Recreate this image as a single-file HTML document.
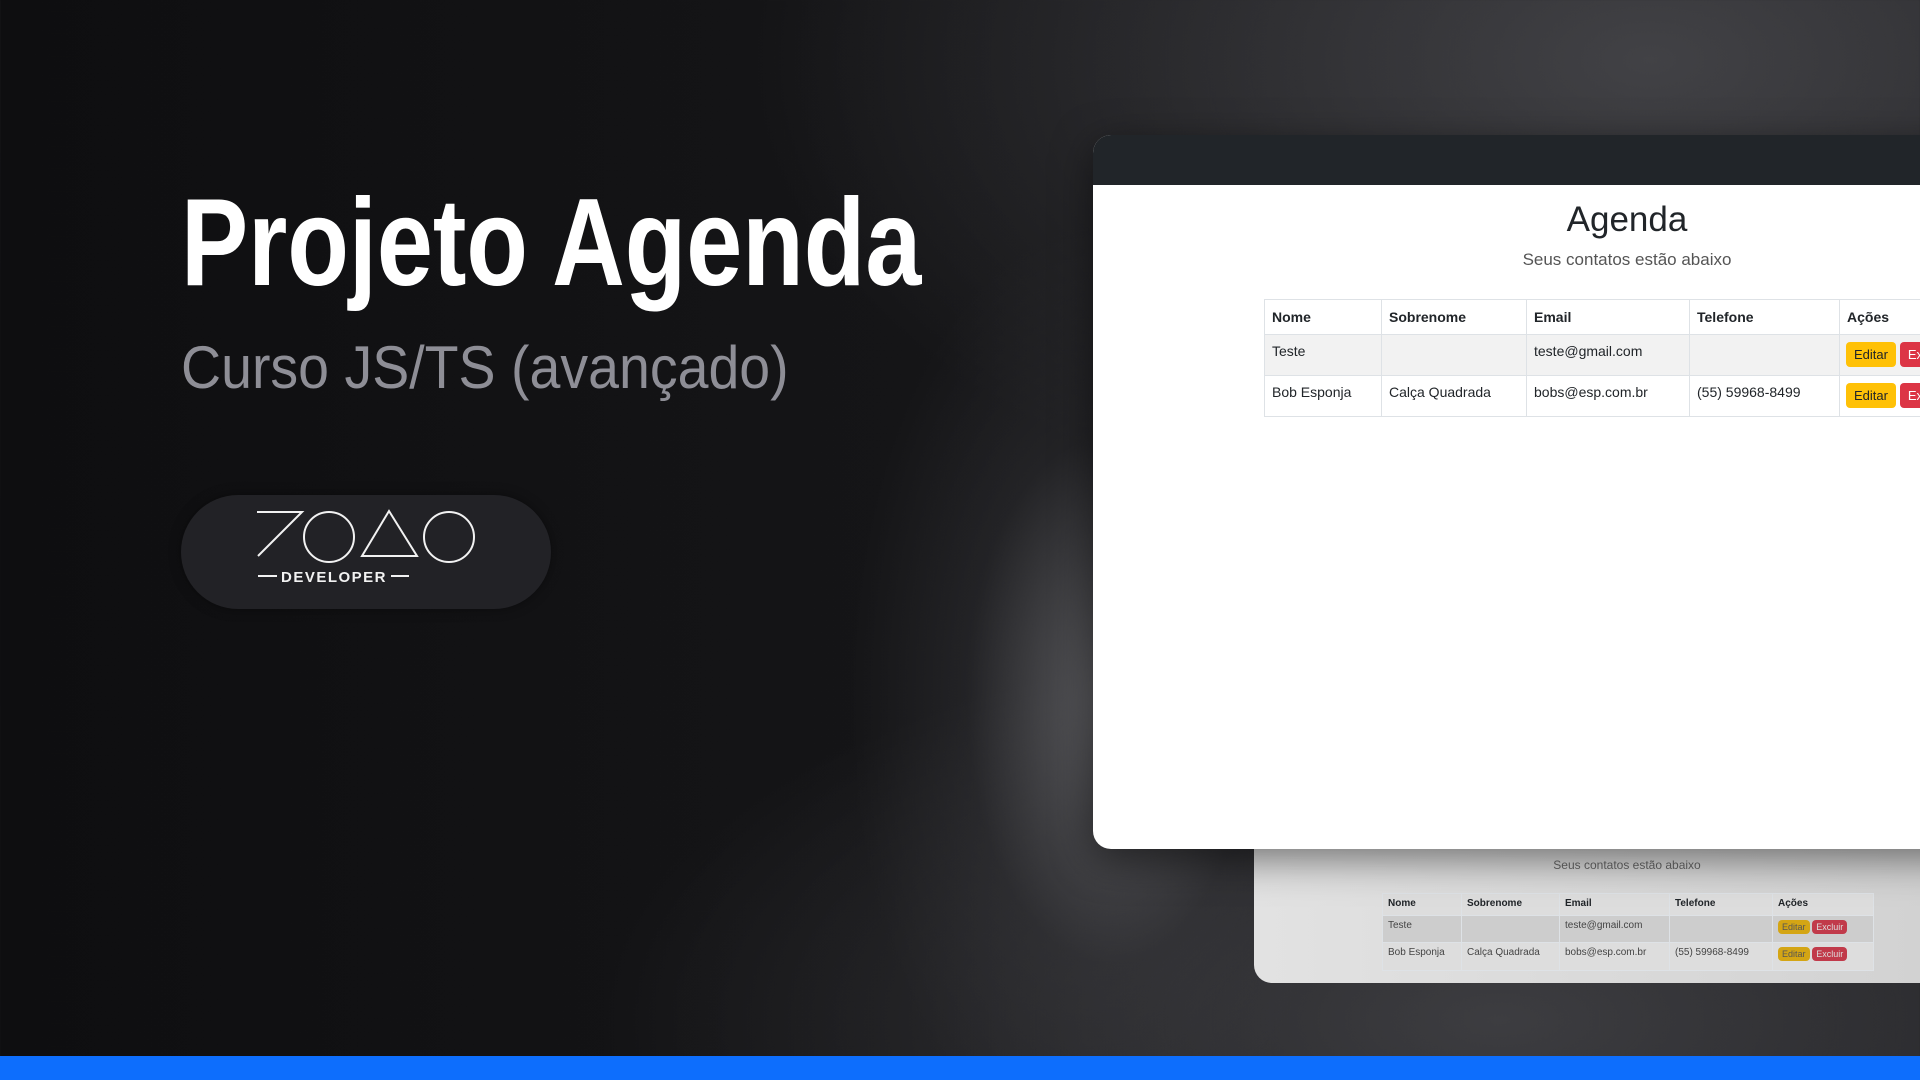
<!DOCTYPE html>
<html><head><meta charset="utf-8"><style>
*{margin:0;padding:0;box-sizing:border-box}
html,body{width:1920px;height:1080px;overflow:hidden}
body{position:relative;font-family:"Liberation Sans",sans-serif;
background:
radial-gradient(ellipse 260px 480px at 1110px 700px, rgba(110,110,114,0.8), rgba(60,60,64,0.35) 55%, rgba(0,0,0,0) 100%),
radial-gradient(ellipse 900px 500px at 1650px 60px, rgba(70,70,74,0.9), rgba(0,0,0,0) 100%),
radial-gradient(ellipse 900px 400px at 1500px 1020px, rgba(70,70,74,0.8), rgba(0,0,0,0) 100%),
linear-gradient(90deg,#0e0e10 0%,#141416 40%,#1c1c1f 100%);}
.t{position:absolute;left:181px;top:181px;font-size:124px;font-weight:bold;color:#fff;white-space:nowrap;transform:scaleX(0.812);transform-origin:left top;line-height:1}
.s{position:absolute;left:181px;top:338px;font-size:60px;color:#8e8e96;white-space:nowrap;transform:scaleX(0.925);transform-origin:left top;line-height:1}
.pill{position:absolute;left:181px;top:495px;width:370px;height:114px;border-radius:57px;background:#222226;box-shadow:0 0 12px rgba(0,0,0,.4)}
.win{position:absolute;border-radius:18px;overflow:hidden}
.w1{left:1093px;top:135px;width:900px;height:714px;background:#fff;box-shadow:0 10px 40px rgba(0,0,0,.5)}
.w1 .bar{height:50px;background:#212529}
.w2{left:1254px;top:780px;width:800px;height:203px;background:linear-gradient(90deg,#e2e2e2,#cfcfcf);}
table{border-collapse:collapse;position:absolute}
td,th{border:1px solid #dee2e6;text-align:left;vertical-align:top;color:#212529}
.btn{display:inline-block;border-radius:4px}
</style></head><body>
<div class="t">Projeto Agenda</div>
<div class="s">Curso JS/TS (avançado)</div>
<div class="pill">
<svg width="370" height="114" style="position:absolute;left:0;top:0">
<g fill="none" stroke="#f2f2f2" stroke-width="2">
<path d="M76 17 H121 L77 61"/>
<circle cx="148" cy="42" r="25"/>
<path d="M208 16 L236 61 H181 Z"/>
<circle cx="268" cy="42" r="25"/>
<path d="M77 81 H96 M210 81 H228"/>
</g>
<text x="153" y="87" text-anchor="middle" fill="#f2f2f2" font-family="Liberation Sans" font-weight="bold" font-size="15" letter-spacing="1.5">DEVELOPER</text>
</svg>
</div>

<div class="win w2">
<div style="position:absolute;left:0;width:746px;top:78px;text-align:center;font-size:12px;color:#666">Seus contatos estão abaixo</div>
<table style="left:128px;top:113px;font-size:10px;background:#ddd">
<tr style="height:22px"><th style="width:79px;padding:4px 5px">Nome</th><th style="width:98px;padding:4px 5px">Sobrenome</th><th style="width:110px;padding:4px 5px">Email</th><th style="width:103px;padding:4px 5px">Telefone</th><th style="width:101px;padding:4px 5px">Ações</th></tr>
<tr style="height:27px;background:#cdcdcd"><td style="padding:4px 5px;color:#444">Teste</td><td></td><td style="padding:4px 5px;color:#444">teste@gmail.com</td><td></td><td style="padding:4px 5px"><span class="btn" style="background:#d4a514;color:#555;padding:2px 4px;font-size:9px">Editar</span> <span class="btn" style="background:#c13a4a;color:#ddd;padding:2px 4px;font-size:9px">Excluir</span></td></tr>
<tr style="height:28px"><td style="padding:4px 5px;color:#444">Bob Esponja</td><td style="padding:4px 5px;color:#444">Calça Quadrada</td><td style="padding:4px 5px;color:#444">bobs@esp.com.br</td><td style="padding:4px 5px;color:#444">(55) 59968-8499</td><td style="padding:4px 5px"><span class="btn" style="background:#d4a514;color:#555;padding:2px 4px;font-size:9px">Editar</span> <span class="btn" style="background:#c13a4a;color:#ddd;padding:2px 4px;font-size:9px">Excluir</span></td></tr>
</table>
</div>

<div class="win w1">
<div class="bar"></div>
<div style="position:absolute;left:0;width:1068px;top:65px;text-align:center;font-size:35px;color:#212529">Agenda</div>
<div style="position:absolute;left:0;width:1068px;top:115px;text-align:center;font-size:17px;color:#555">Seus contatos estão abaixo</div>
<table style="left:171px;top:164px;font-size:14px">
<tr style="height:35px"><th style="width:117px;padding:9px 7px">Nome</th><th style="width:145px;padding:9px 7px">Sobrenome</th><th style="width:163px;padding:9px 7px">Email</th><th style="width:150px;padding:9px 7px">Telefone</th><th style="width:140px;padding:9px 7px;white-space:nowrap">Ações</th></tr>
<tr style="height:41px;background:#f2f2f2"><td style="padding:8px 7px">Teste</td><td></td><td style="padding:8px 7px">teste@gmail.com</td><td></td><td style="padding:7px 6px;white-space:nowrap"><span class="btn" style="background:#ffc107;padding:5px 8px;font-size:13px">Editar</span> <span class="btn" style="background:#dc3545;color:#fff;padding:5px 8px;font-size:13px">Excluir</span></td></tr>
<tr style="height:41px"><td style="padding:8px 7px">Bob Esponja</td><td style="padding:8px 7px">Calça Quadrada</td><td style="padding:8px 7px">bobs@esp.com.br</td><td style="padding:8px 7px">(55) 59968-8499</td><td style="padding:7px 6px;white-space:nowrap"><span class="btn" style="background:#ffc107;padding:5px 8px;font-size:13px">Editar</span> <span class="btn" style="background:#dc3545;color:#fff;padding:5px 8px;font-size:13px">Excluir</span></td></tr>
</table>
</div>

<div style="position:absolute;left:0;top:1056px;width:1920px;height:24px;background:#0d6efd"></div>
</body></html>
